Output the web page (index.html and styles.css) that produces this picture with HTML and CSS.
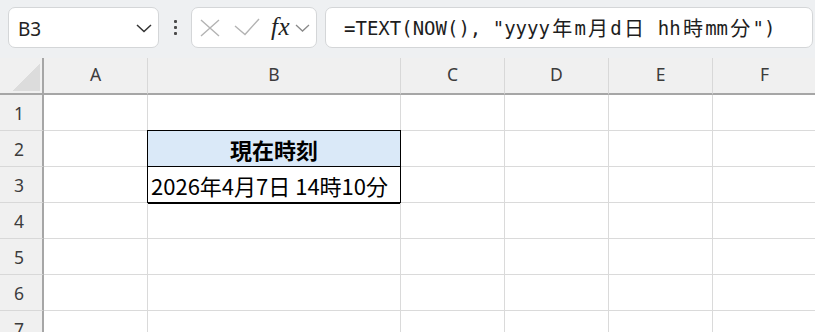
FILE: index.html
```html
<!DOCTYPE html>
<html lang="ja">
<head>
<meta charset="utf-8">
<link rel="stylesheet" href="styles.css">
</head>
<body>
<div class="toolbar">
  <div class="namebox">
    <span class="ref">B3</span>
    <svg class="chev" width="16" height="10" viewBox="0 0 16 10"><polyline points="1,2 8,8.5 15,2" fill="none" stroke="#333" stroke-width="1.5"/></svg>
  </div>
  <div class="dots"><i></i><i></i><i></i></div>
  <div class="fxbox">
    <svg class="ico-x" width="20" height="18" viewBox="0 0 20 18"><path d="M1 1 L19 17 M19 1 L1 17" stroke="#b3b3b3" stroke-width="1.4" fill="none"/></svg>
    <svg class="ico-check" width="26" height="18" viewBox="0 0 26 18"><polyline points="1,8 11,16.5 25,1" fill="none" stroke="#b3b3b3" stroke-width="1.4"/></svg>
    <span class="fx">fx</span>
    <svg class="chev-s" width="15" height="8" viewBox="0 0 15 8"><polyline points="1,1 7.5,7 14,1" fill="none" stroke="#8a8a8a" stroke-width="1.3"/></svg>
  </div>
  <div class="formula">=TEXT(NOW(), "yyyy<span class="cj">年</span>m<span class="cj">月</span>d<span class="cj">日</span> hh<span class="cj">時</span>mm<span class="cj">分</span>")</div>
</div>
<div class="sheet">
  <div class="corner"><span class="tri"></span></div>
  <div class="colh">A</div>
  <div class="colh">B</div>
  <div class="colh">C</div>
  <div class="colh">D</div>
  <div class="colh">E</div>
  <div class="colh">F</div>

  <div class="rowh">1</div>
  <div class="cell"></div><div class="cell"></div><div class="cell"></div><div class="cell"></div><div class="cell"></div><div class="cell"></div>

  <div class="rowh">2</div>
  <div class="cell"></div><div class="cell title">現在時刻</div><div class="cell"></div><div class="cell"></div><div class="cell"></div><div class="cell"></div>

  <div class="rowh">3</div>
  <div class="cell"></div><div class="cell value">2026年4月7日 14時10分</div><div class="cell"></div><div class="cell"></div><div class="cell"></div><div class="cell"></div>

  <div class="rowh">4</div>
  <div class="cell"></div><div class="cell"></div><div class="cell"></div><div class="cell"></div><div class="cell"></div><div class="cell"></div>

  <div class="rowh">5</div>
  <div class="cell"></div><div class="cell"></div><div class="cell"></div><div class="cell"></div><div class="cell"></div><div class="cell"></div>

  <div class="rowh">6</div>
  <div class="cell"></div><div class="cell"></div><div class="cell"></div><div class="cell"></div><div class="cell"></div><div class="cell"></div>

  <div class="rowh">7</div>
  <div class="cell"></div><div class="cell"></div><div class="cell"></div><div class="cell"></div><div class="cell"></div><div class="cell"></div>
</div>
</body>
</html>
```
FILE: styles.css
```css
* { box-sizing: border-box; }
html, body { margin: 0; padding: 0; }
body {
  width: 815px;
  height: 332px;
  overflow: hidden;
  background: #ffffff;
  font-family: "Noto Sans", "Noto Sans CJK JP", sans-serif;
  color: #222;
}
.toolbar {
  height: 58px;
  background: #eef0f2;
  display: flex;
  align-items: flex-start;
  padding: 7px 2px 0 8px;
}
.namebox {
  width: 151px;
  height: 41px;
  background: #fff;
  border: 1px solid #d4d6d8;
  border-radius: 7px;
  display: flex;
  align-items: center;
  justify-content: space-between;
  padding: 0 6px 0 9px;
}
.ref {
  font-family: "Noto Sans", sans-serif;
  font-size: 19px;
  color: #222;
  margin-top: 2px;
}
.chev { display: block; margin-top: 1px; }
.dots {
  width: 32px;
  height: 41px;
  display: flex;
  flex-direction: column;
  align-items: center;
  justify-content: center;
  gap: 3px;
}
.dots i {
  display: block;
  width: 3px;
  height: 3px;
  background: #4a4a4a;
  border-radius: 1px;
}
.fxbox {
  width: 126px;
  height: 41px;
  background: #fff;
  border: 1px solid #d4d6d8;
  border-radius: 7px;
  display: flex;
  align-items: center;
  padding-left: 8px;
}
.ico-x { display: block; }
.ico-check { display: block; margin-left: 14px; margin-top: -1px; }
.fx {
  font-family: "Liberation Serif", serif;
  font-style: italic;
  font-size: 25px;
  color: #222;
  margin-left: 11px;
  line-height: 1;
  margin-top: -3px;
  letter-spacing: 0.5px;
}
.chev-s { display: block; margin-left: 5px; margin-top: 1px; }
.formula {
  flex: 1;
  margin-left: 8px;
  height: 41px;
  background: #fff;
  border: 1px solid #d4d6d8;
  border-radius: 7px;
  display: flex;
  align-items: center;
  padding-left: 18px;
  font-family: "DejaVu Sans Mono", monospace;
  font-size: 19px;
  color: #1e1e1e;
  white-space: pre;
}
.cj {
  display: inline-block;
  width: 24.5px;
  font-family: "Noto Sans CJK JP", sans-serif;
  font-size: 20px;
  text-align: center;
}
.sheet {
  display: grid;
  grid-template-columns: 44px 104px 253px 104px 104px 104px 104px;
  grid-template-rows: 37px repeat(7, 36px);
  width: 817px;
}
.corner {
  background: #f0f0f0;
  border-right: 2px solid #a6a6a6;
  border-bottom: 2px solid #a6a6a6;
  position: relative;
}
.tri {
  position: absolute;
  right: 2px;
  bottom: 2px;
  width: 28px;
  height: 27px;
  background: linear-gradient(to bottom right, transparent 50%, #dcdcdc 50%);
}
.colh {
  background: #f0f0f0;
  border-right: 1px solid #d8d8d8;
  border-bottom: 2px solid #a6a6a6;
  display: flex;
  align-items: center;
  justify-content: center;
  font-family: "Noto Sans", sans-serif;
  font-size: 17.5px;
  color: #3c3c3c;
  padding-bottom: 4px;
}
.rowh {
  background: #f0f0f0;
  border-right: 2px solid #a6a6a6;
  border-bottom: 1px solid #d8d8d8;
  display: flex;
  align-items: center;
  justify-content: center;
  font-family: "Noto Sans", sans-serif;
  font-size: 17.5px;
  color: #3c3c3c;
  padding-right: 4px;
}
.cell {
  border-right: 1px solid #dadada;
  border-bottom: 1px solid #dadada;
}
.title {
  background: #dae9f8;
  border-right-color: #000;
  border-bottom-color: #000;
  box-shadow: -1px 0 0 #000, 0 -1px 0 #000, -1px -1px 0 #000;
  font-family: "Noto Sans CJK JP", sans-serif;
  font-weight: bold;
  font-size: 22px;
  color: #000;
  display: flex;
  align-items: center;
  justify-content: center;
}
.value {
  border-right-color: #000;
  border-bottom-color: #000;
  box-shadow: -1px 0 0 #000, -1px 1px 0 #000;
  font-family: "Noto Sans CJK JP", sans-serif;
  font-size: 22px;
  color: #000;
  display: flex;
  align-items: center;
  padding-left: 3px;
  white-space: nowrap;
}
```
